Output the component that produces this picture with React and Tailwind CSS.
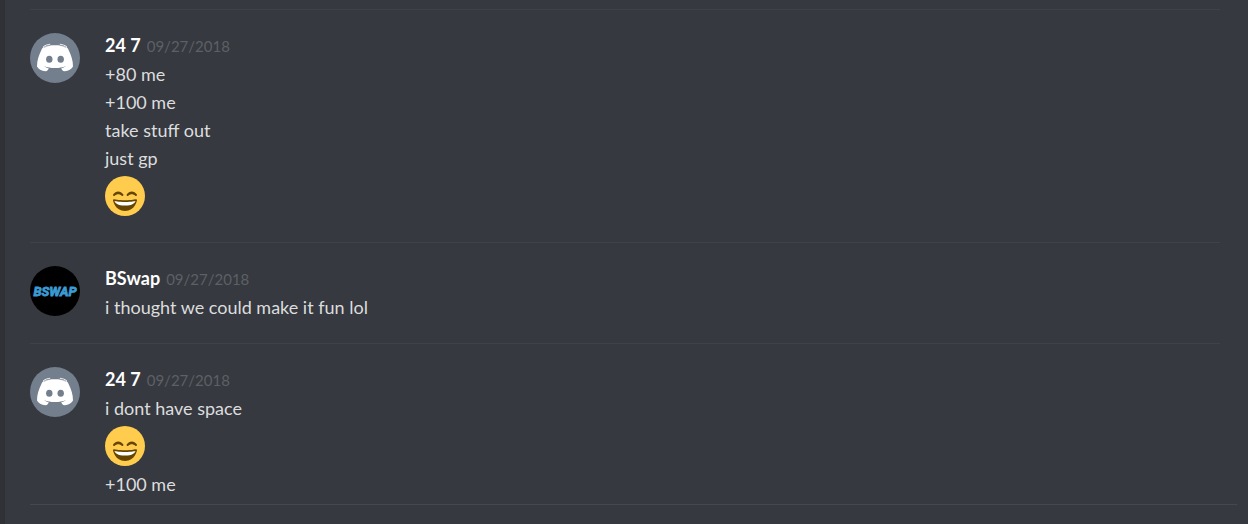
import React from 'react';

const DiscordAvatar = () => (
    <svg viewBox="0 0 50 50" className="w-[50px] h-[50px] shrink-0" role="img" aria-label="Discord avatar">
        <circle cx="25" cy="25" r="25" fill="#747f8d" />
        <path
            fill="#fff"
            d="M14.200 13.800C17 12.700 20.800 12.300 25 12.300s8 .4 10.800 1.500c1.300.6 2.100 1.600 2.800 3.200C41.200 22.200 43 27.500 43 33.500c-1.300 2.600-4.500 4.300-8.300 4.700-1 .1-1.700-.2-2.300-1l-1.300-1.800c2-.5 3.500-1.300 4.800-2.500-3 1.400-6.500 2-10.900 2s-7.900-.6-10.900-2c1.300 1.200 2.800 2 4.800 2.500l-1.300 1.800c-.6.8-1.300 1.100-2.300 1C11.500 37.800 8.300 36.100 7 33.500c0-6 1.800-11.300 4.400-16.500.7-1.600 1.500-2.600 2.800-3.200z"
        />
        <path
            fill="none"
            stroke="#fff"
            strokeWidth="0.900"
            strokeLinecap="round"
            d="M13.500 13.500c1.800-1.200 3.800-1.900 6.300-2.200M36.500 13.500c-1.800-1.200-3.800-1.900-6.300-2.200"
        />
        <path
            fill="none"
            stroke="#747f8d"
            strokeWidth="0.500"
            strokeLinecap="round"
            d="M14.500 14.300c1.500-.9 3.200-1.500 5.500-2M35.500 14.300c-1.500-.9-3.200-1.500-5.500-2"
        />
        <ellipse cx="19.300" cy="26.300" rx="3.200" ry="3.500" fill="#747f8d" />
        <ellipse cx="30.700" cy="26.300" rx="3.200" ry="3.500" fill="#747f8d" />
    </svg>
);

const BSwapAvatar = () => (
    <svg viewBox="0 0 50 50" className="w-[50px] h-[50px] shrink-0" role="img" aria-label="BSwap avatar">
        <circle cx="25" cy="25" r="25" fill="#000" />
        <text
            x="25"
            y="30"
            textAnchor="middle"
            fill="#3b9bd3"
            stroke="#3b9bd3"
            strokeWidth="0.800"
            className="font-['Roboto',sans-serif] text-[13px] font-bold italic"
        >
            BSWAP
        </text>
    </svg>
);

const SmileEmoji = () => (
    <svg viewBox="0 0 36 36" className="w-10 h-10 my-1" role="img" aria-label="Smile">
        <circle cx="18" cy="18" r="18" fill="#ffcc4d" />
        <path
            fill="#664500"
            d="M28.500 21.100c-.2-.2-.5-.3-.8-.2 0 0-3.600.9-9.700.9s-9.700-.9-9.700-.9c-.3-.1-.6 0-.8.2s-.3.500-.3.800C7.200 22.200 9 31.500 18 31.500s10.800-9.300 10.800-9.600c0-.3-.1-.6-.3-.8z"
        />
        <path
            fill="#fff"
            d="M18 26.600c-6.500 0-9.200-2.400-9.400-4.200 0 0 3.200.9 9.400.9s9.400-.9 9.400-.9c-.2 1.800-2.900 4.200-9.400 4.200z"
        />
        <path
            fill="#664500"
            d="M15.700 18c-.3 0-.5-.1-.7-.3-1.800-1.800-4.400-1.800-6.200 0-.4.4-1 .4-1.300.1-.3-.4-.4-.9-.1-1.300 2.200-3.500 6.800-3.500 9 0 .3.400.2.900-.1 1.300-.2.100-.4.200-.6.200zM27.900 18c-.3 0-.5-.1-.7-.3-1.800-1.800-4.400-1.800-6.200 0-.4.4-1 .4-1.300.1-.3-.4-.4-.9-.1-1.300 2.200-3.500 6.800-3.500 9 0 .3.400.2.900-.1 1.300-.2.100-.4.200-.6.200z"
        />
    </svg>
);

const groups = [
    {
        id: 1,
        author: '24 7',
        avatar: DiscordAvatar,
        date: '09/27/2018',
        messages: ['+80 me', '+100 me', 'take stuff out', 'just gp', ':smile:'],
    },
    {
        id: 2,
        author: 'BSwap',
        avatar: BSwapAvatar,
        date: '09/27/2018',
        messages: ['i thought we could make it fun lol'],
    },
    {
        id: 3,
        author: '24 7',
        avatar: DiscordAvatar,
        date: '09/27/2018',
        messages: ['i dont have space', ':smile:', '+100 me'],
    },
];

const MessageGroup = ({ group }) => {
    const Avatar = group.avatar;
    return (
        <article className="flex gap-[25px] border-t border-[#3f4248] pt-[23px] pb-[22px] last:pb-1.5">
            <Avatar />
            <div className="min-w-0">
                <h2 className="flex items-baseline gap-1.5 h-[27px] leading-6">
                    <span className="text-[18px] font-bold text-white">{group.author}</span>
                    <time className="text-[15px] text-[#5d6066]">{group.date}</time>
                </h2>
                {group.messages.map((message, index) =>
                    message === ':smile:' ? (
                        <SmileEmoji key={index} />
                    ) : (
                        <p key={index} className="text-[18px] leading-7 text-[#dcddde]">{message}</p>
                    )
                )}
            </div>
        </article>
    );
};

const App = () => {
    return (
        <main className="min-h-screen bg-[#36393f] border-l-[5px] border-[#2f3136] pt-[9px] font-['Lato','Open_Sans',sans-serif]">
            <section className="ml-[25px] mr-7">
                {groups.map((group) => (
                    <MessageGroup key={group.id} group={group} />
                ))}
            </section>
            <hr className="ml-[25px] mr-[11px] border-[#46484d]" />
        </main>
    );
};

export default App;
